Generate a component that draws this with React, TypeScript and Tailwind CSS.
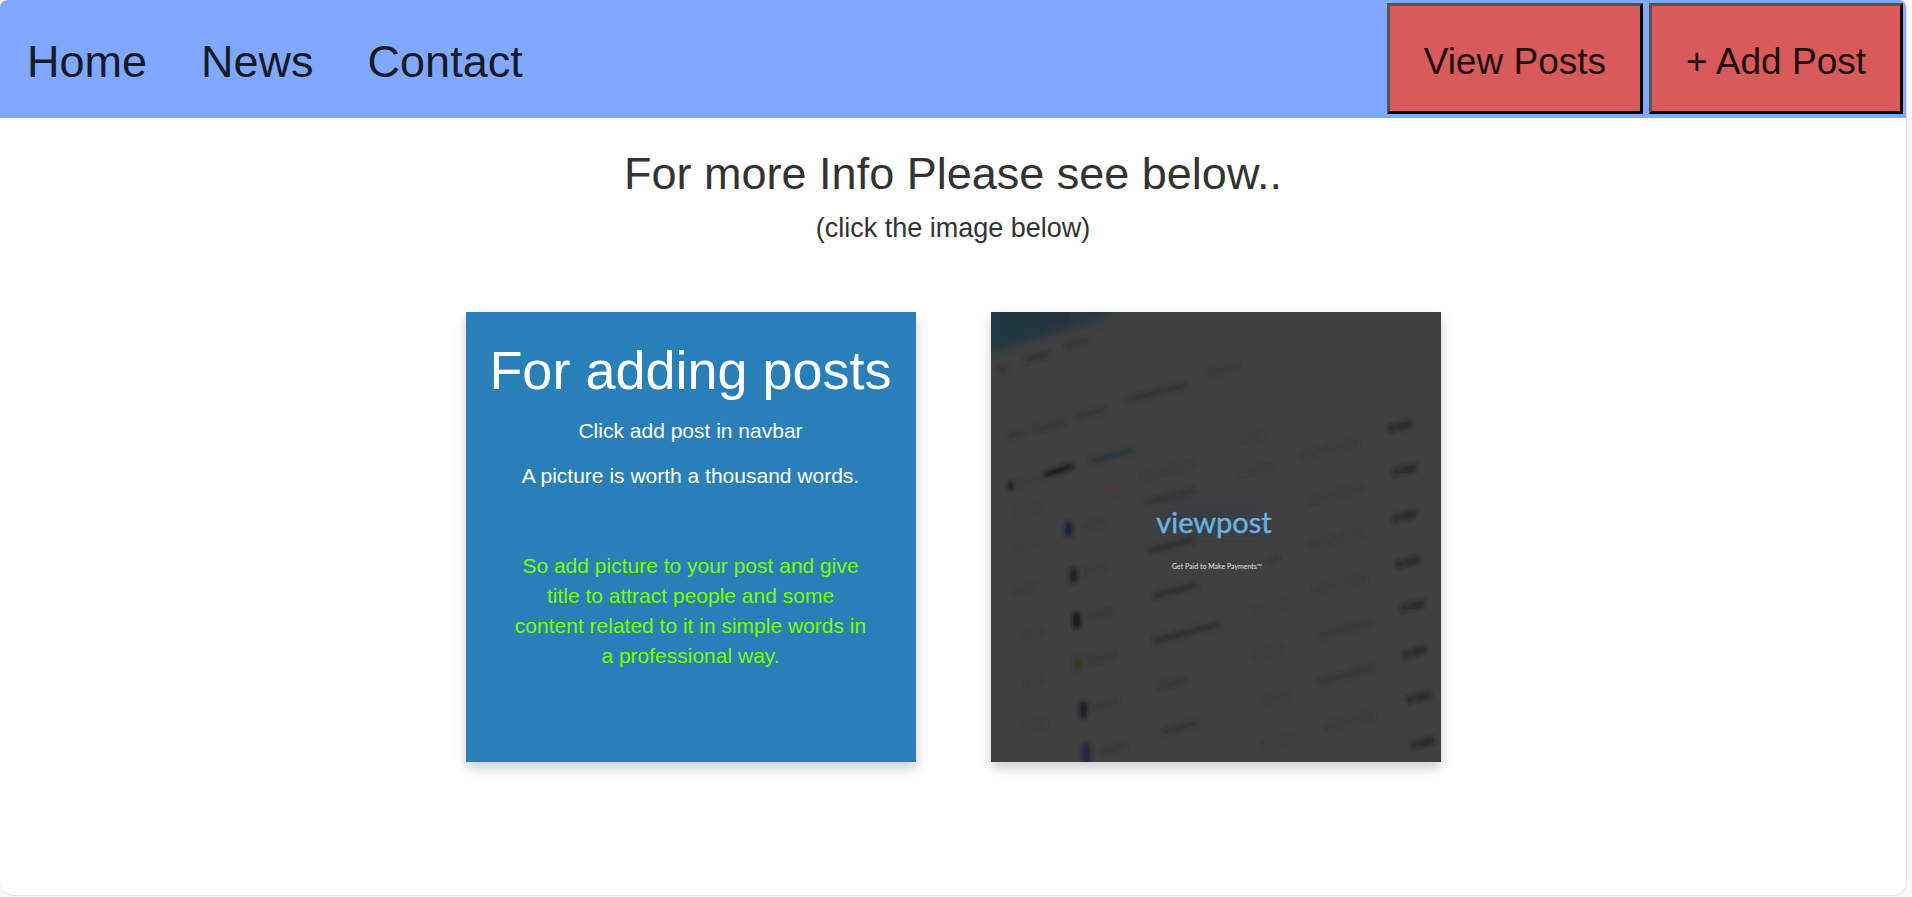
const links = ["Home", "News", "Contact"];

// x, y, length, opacity of the blurred text marks in the dashboard backdrop
const marks: [number, number, number, number][] = [
  [6, 58, 10, 0.5], [34, 48, 24, 0.55], [74, 34, 24, 0.4],
  [16, 125, 18, 0.45], [40, 119, 34, 0.4], [84, 105, 30, 0.45], [136, 88, 62, 0.5],
  [216, 62, 32, 0.35], [22, 173, 28, 0.3], [150, 165, 52, 0.2], [250, 128, 22, 0.2],
  [310, 144, 58, 0.3], [250, 162, 32, 0.2], [155, 191, 48, 0.4], [158, 239, 44, 0.7],
  [163, 284, 44, 0.7], [163, 329, 66, 0.7], [168, 375, 26, 0.4], [172, 420, 34, 0.5],
  [318, 189, 54, 0.3], [318, 234, 54, 0.3], [322, 279, 54, 0.3], [328, 324, 54, 0.35],
  [328, 370, 54, 0.4], [334, 415, 50, 0.3],
  [24, 202, 26, 0.25], [24, 235, 22, 0.25], [24, 280, 20, 0.3], [32, 324, 20, 0.25],
  [34, 371, 18, 0.3], [34, 416, 22, 0.25],
  [92, 215, 22, 0.3], [92, 260, 24, 0.3], [95, 306, 26, 0.35], [97, 350, 30, 0.35],
  [100, 396, 28, 0.35], [110, 440, 26, 0.35],
  [274, 250, 14, 0.35], [262, 300, 32, 0.25], [262, 344, 30, 0.25], [272, 388, 26, 0.3], [272, 434, 30, 0.25],
];

const amounts: [number, number][] = [
  [398, 117], [402, 161], [402, 207], [405, 253], [410, 297], [412, 343], [416, 388], [420, 434],
];

const icons: [number, number, number, string][] = [
  [74, 210, 14, "#14222e"], [79, 256, 14, "#1d1f21"], [82, 301, 15, "#151617"],
  [84, 345, 13, "#35391d"], [89, 390, 16, "#171c22"], [92, 431, 20, "#172b3d"],
];

function ViewpostPicture() {
  return (
    <svg viewBox="0 0 450 450" className="block size-full" role="img" aria-label="viewpost">
      <defs>
        <filter id="soft" x="-5%" y="-5%" width="110%" height="110%">
          <feGaussianBlur stdDeviation="2.2" />
        </filter>
        <filter id="softer" x="-5%" y="-5%" width="110%" height="110%">
          <feGaussianBlur stdDeviation="4" />
        </filter>
        <linearGradient id="corner" x1="0" y1="0" x2="1" y2="0">
          <stop offset="0" stopColor="#213b43" />
          <stop offset="0.5" stopColor="#25353e" />
          <stop offset="1" stopColor="#343d41" />
        </linearGradient>
      </defs>
      <rect width="450" height="450" fill="#404040" />
      <g filter="url(#softer)">
        <path d="M-12 -12H142L112 8L70 20L0 40L-12 42Z" fill="url(#corner)" />
        <rect x="172" y="188" width="102" height="34" fill="#323d42" fillOpacity="0.6" />
      </g>
      <g filter="url(#soft)">
        {marks.map(([x, y, length, opacity], i) => (
          <path
            key={i}
            d={`M${x} ${y}l${length} ${-length * 0.26}`}
            stroke="#2b2b2b"
            strokeOpacity={opacity}
            strokeWidth="6"
          />
        ))}
        {amounts.map(([x, y], i) => (
          <path
            key={i}
            d={`M${x} ${y}l24 -6`}
            stroke="#1e1e1e"
            strokeOpacity="0.65"
            strokeWidth="7"
            strokeDasharray="6 2 16 1"
          />
        ))}
        <path d="M53 163L82 154" stroke="#1b1b1b" strokeWidth="6" />
        <path d="M17 174h5" stroke="#1b1b1b" strokeWidth="8" />
        <path d="M100 149L142 138" stroke="#29343d" strokeWidth="5" />
        <path d="M114 177h22" stroke="#493d39" strokeOpacity="0.6" strokeWidth="8" />
        {icons.map(([x, y, height, color], i) => (
          <rect key={i} x={x} y={y} width="7" height={height} fill={color} />
        ))}
      </g>
      <text
        x="223"
        y="221"
        textAnchor="middle"
        fontFamily="Lato, 'Open Sans', sans-serif"
        fontSize="29"
        fill="#68b2e3"
        stroke="#68b2e3"
        strokeWidth="0.4"
      >
        viewpost
      </text>
      <text
        x="226"
        y="257"
        textAnchor="middle"
        fontFamily="Lato, 'Open Sans', sans-serif"
        fontSize="7"
        fill="#e2e2e2"
      >
        Get Paid to Make Payments™
      </text>
    </svg>
  );
}

function NavButton({ children }: { children: string }) {
  return (
    <button
      type="button"
      className="h-[111px] border-[3px] border-t-[#545454] border-r-black border-b-black border-l-[#545454] bg-[#d85a5a] px-[34px] pt-1.5 text-[37px] text-[#200f10]"
    >
      {children}
    </button>
  );
}

export default function App() {
  return (
    <div className="min-h-screen bg-[#f7f7f7] pr-[5px] pb-px font-['Liberation_Sans',Arial,sans-serif] text-[#333]">
      <div className="min-h-[calc(100vh-1px)] overflow-hidden rounded-t-lg rounded-b-[14px] border-r border-b border-[#e2e2e2] bg-white">
        <header className="flex h-[118px] items-start justify-between bg-[#81a8ff] pt-[3px] pr-[3px] pl-[27px]">
          <nav className="flex h-[118px] items-center gap-[54px] text-[45px] text-[#171b26]">
            {links.map((label) => (
              <a key={label} href="#">
                {label}
              </a>
            ))}
          </nav>
          <div className="flex gap-[6px]">
            <NavButton>View Posts</NavButton>
            <NavButton>+ Add Post</NavButton>
          </div>
        </header>

        <main className="flex flex-col items-center pb-16">
          <h1 className="mt-7 text-[45px] leading-[56px]">For more Info Please see below..</h1>
          <p className="mt-2 text-[27px] leading-9">(click the image below)</p>

          <div className="mt-[66px] flex flex-wrap justify-center gap-[75px]">
            <article className="size-[450px] bg-[#2980b9] pt-7 text-center text-[21px] leading-[30px] text-white shadow-[0_6px_12px_rgba(0,0,0,0.2)]">
              <h2 className="text-[54px] leading-[60px]">For adding posts</h2>
              <p className="mt-4">Click add post in navbar</p>
              <p className="mt-[15px]">A picture is worth a thousand words.</p>
              <p className="mt-[60px] px-[45px] text-[#7cfc00]">
                So add picture to your post and give title to attract people and some content related to it
                in simple words in a professional way.
              </p>
            </article>
            <a href="#" className="block size-[450px] shadow-[0_6px_12px_rgba(0,0,0,0.2)]">
              <ViewpostPicture />
            </a>
          </div>
        </main>
      </div>
    </div>
  );
}
